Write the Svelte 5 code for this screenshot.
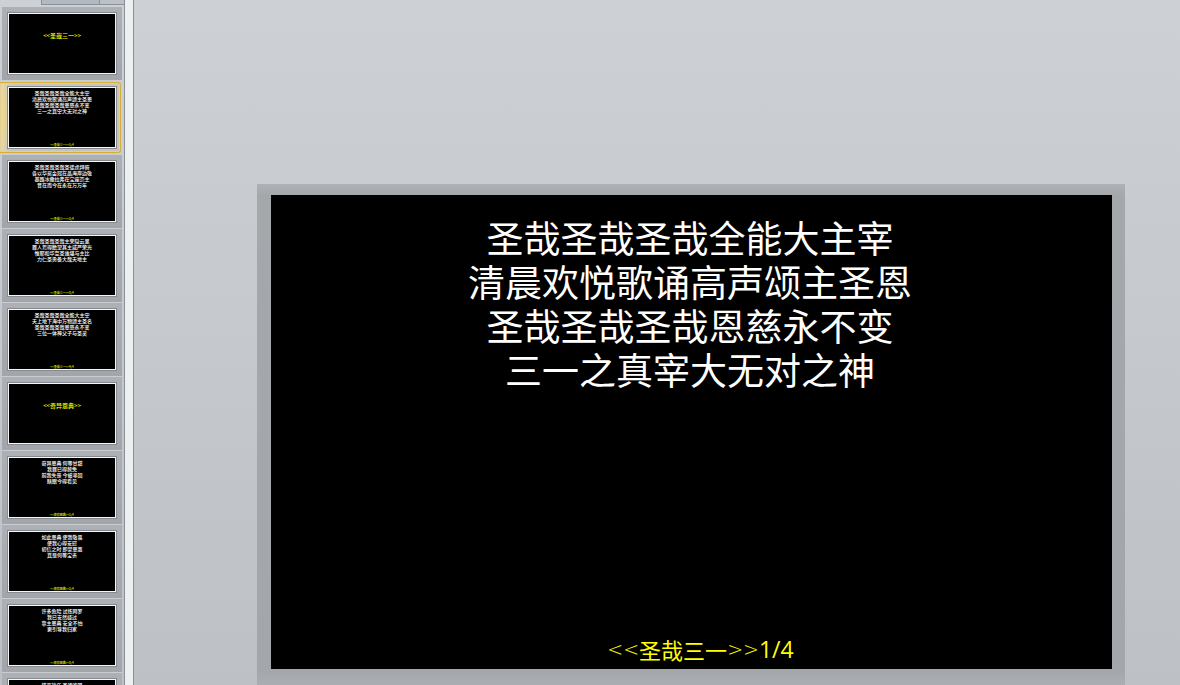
<script>
  const slides = [
    { song: '圣哉三一' },
    {
      song: '圣哉三一',
      page: '1/4',
      lines: ['圣哉圣哉圣哉全能大主宰', '清晨欢悦歌诵高声颂主圣恩', '圣哉圣哉圣哉恩慈永不变', '三一之真宰大无对之神']
    },
    {
      song: '圣哉三一',
      page: '2/4',
      lines: ['圣哉圣哉圣哉圣徒虔拜俯', '各以华冕金冠在晶海岸边敬', '基路冰撒拉弗在宝座崇主', '昔在而今在永在万万年']
    },
    {
      song: '圣哉三一',
      page: '3/4',
      lines: ['圣哉圣哉圣哉主荣隐云里', '罪人焉得瞻望其主威严荣光', '惟耶和华至圣谁堪与主比', '力仁圣勇备大哉天地主']
    },
    {
      song: '圣哉三一',
      page: '4/4',
      lines: ['圣哉圣哉圣哉全能大主宰', '天上地下海中万物颂主圣名', '圣哉圣哉圣哉恩慈永不变', '三位一体神父子与圣灵']
    },
    { song: '奇异恩典' },
    { song: '奇异恩典', page: '1/4', lines: ['奇异恩典 何等甘甜', '我罪已得赦免', '前我失丧 今被寻回', '瞎眼今得看见'] },
    { song: '奇异恩典', page: '2/4', lines: ['如此恩典 使我敬畏', '使我心得安慰', '初信之时 即蒙恩惠', '真是何等宝贵'] },
    { song: '奇异恩典', page: '3/4', lines: ['许多危险 试炼网罗', '我已安然经过', '靠主恩典 安全不怕', '更引导我归家'] },
    { song: '奇异恩典', page: '4/4', lines: ['将来禧年 圣徒欢聚', '恩光爱谊千年', '喜乐颂赞 在父座前', '深望那日快现'] }
  ];
  let selected = $state(1);
  const current = $derived(slides[selected]);
</script>

<div class="app">
  <aside>
    <div class="tabs"><span></span><span></span></div>
    <nav aria-label="幻灯片">
      {#each slides as slide, i}
        <button class:selected={i === selected} aria-label={`幻灯片 ${i + 1}`} onclick={() => (selected = i)}>
          <span class="thumb">
            {#if slide.lines}
              <span class="thumb-lines">
                {#each slide.lines as line}<span>{line}</span>{/each}
              </span>
              <span class="thumb-foot">&lt;&lt;{slide.song}&gt;&gt;{slide.page}</span>
            {:else}
              <span class="thumb-title">&lt;&lt;{slide.song}&gt;&gt;</span>
            {/if}
          </span>
        </button>
      {/each}
    </nav>
  </aside>
  <div class="splitter"></div>
  <main>
    <div class="frame">
      <section class="slide">
        {#if current.lines}
          <div class="lyrics">
            {#each current.lines as line}<p>{line}</p>{/each}
          </div>
          <footer><span class="angle">&lt;&lt;</span>{current.song}<span class="angle">&gt;&gt;</span><span class="page">{current.page}</span></footer>
        {:else}
          <h1>&lt;&lt;{current.song}&gt;&gt;</h1>
        {/if}
      </section>
    </div>
  </main>
</div>

<style>
  :global(body) {
    margin: 0;
  }
  .app {
    box-sizing: border-box;
    display: flex;
    height: 100vh;
    overflow: hidden;
    background: linear-gradient(#cdd0d5, #bdc0c5);
    font-family: 'Noto Sans CJK SC', sans-serif;
  }
  aside {
    box-sizing: border-box;
    flex: none;
    width: 124px;
    padding: 0 2px;
    overflow: hidden;
  }
  .tabs {
    box-sizing: border-box;
    display: flex;
    height: 5px;
    margin: 0 -2px 2px 39px;
    border: solid #8a929b;
    border-width: 0 0 1px 1px;
    background: #b3b9c1;
  }
  .tabs span {
    flex: 7;
  }
  .tabs span + span {
    flex: 3;
    border-left: 1px solid #8a929b;
    background: #bcc1c8;
  }
  nav {
    display: flex;
    flex-direction: column;
    gap: 1px;
  }
  button {
    box-sizing: border-box;
    flex: none;
    display: block;
    width: 100%;
    height: 73px;
    padding: 5px;
    border: 0;
    background: linear-gradient(#adb0b5, #a2a6aa);
    font-family: inherit;
    cursor: pointer;
  }
  nav button:not(.selected) {
    box-shadow: 0 1px #c9ccd0;
  }
  button.selected {
    width: 121px;
    height: 71px;
    margin: 1px 0 1px -2px;
    padding: 3px 3px 3px 7px;
    border: solid #d6ae3c;
    border-width: 1px 1px 1px 0;
    border-radius: 0 3px 3px 0;
    box-shadow: inset 0 0 0 1px #e3cf93;
    background: linear-gradient(90deg, rgb(245 224 150 / 60%), rgb(190 190 185 / 60%) 12px), linear-gradient(#d9d2b8, #f3d679 50%, #d0ccc0);
  }
  .thumb {
    box-sizing: border-box;
    display: flex;
    flex-direction: column;
    width: 110px;
    height: 63px;
    padding-top: 2px;
    border: 1px solid #858a91;
    outline: 1px solid #f5f5f5;
    outline-offset: -2px;
    background: #000;
    overflow: hidden;
    text-align: center;
    font-weight: 500;
  }
  .thumb-title {
    padding-top: 16px;
    color: #ff0;
    font-size: 6px;
    line-height: 9px;
  }
  .thumb-lines {
    display: flex;
    flex-direction: column;
    padding-top: 1px;
    color: #fff;
    font-size: 5px;
    line-height: 6px;
    white-space: nowrap;
  }
  .thumb-foot {
    margin-top: auto;
    padding-bottom: 1px;
    color: #ff0;
    font-size: 3px;
    line-height: 4px;
  }
  .splitter {
    box-sizing: border-box;
    flex: none;
    width: 10px;
    border: solid #8b9096;
    border-width: 0 1px;
    background: #eeeff1;
  }
  main {
    box-sizing: border-box;
    flex: 1;
    min-width: 0;
    padding: 184px 55px 0 123px;
  }
  .frame {
    box-sizing: border-box;
    height: 100%;
    padding: 11px 13px 16px 14px;
    background: linear-gradient(#aeb1b5, #a4a8ab 11px, #a3a7ab 485px, #abaeb2);
  }
  .slide {
    box-sizing: border-box;
    display: flex;
    flex-direction: column;
    height: 100%;
    padding: 20px 0 4px;
    background: #000;
    text-align: center;
  }
  .lyrics {
    padding-right: 3px;
    color: #fff;
    font-size: 37px;
    line-height: 44px;
  }
  p {
    margin: 0;
  }
  footer {
    display: flex;
    justify-content: center;
    margin-top: auto;
    padding-left: 18px;
    color: #ff0;
    font-size: 22px;
    line-height: 32px;
  }
  .angle {
    font-family: 'DejaVu Sans', sans-serif;
    font-size: 19px;
    font-weight: 200;
  }
  .page {
    font-family: 'Open Sans', sans-serif;
    font-size: 23px;
  }
  h1 {
    margin: 120px 0 0;
    color: #ff0;
    font-size: 44px;
    font-weight: 400;
  }
</style>
